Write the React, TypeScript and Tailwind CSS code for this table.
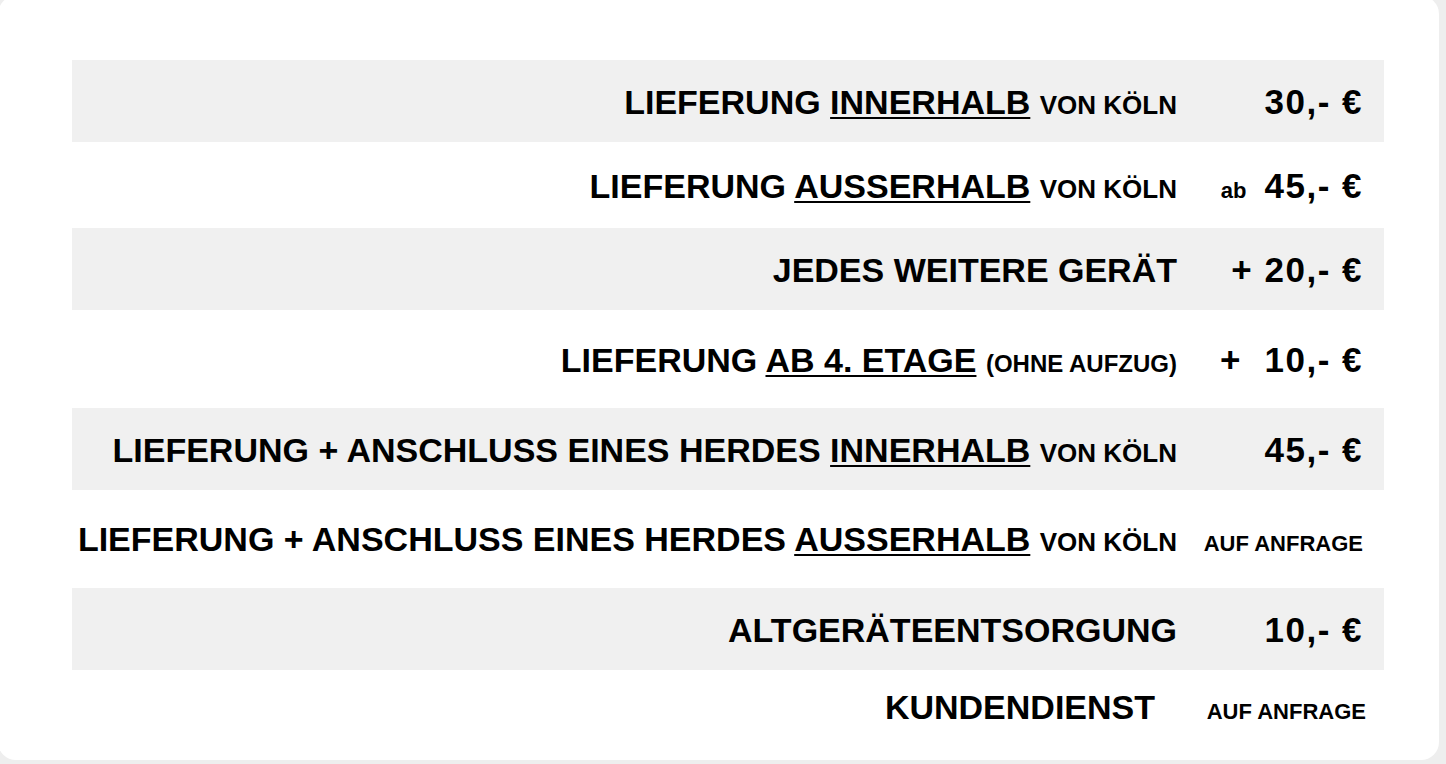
const rows = [
  { bg: "bg-[#f0f0f0]", h: "h-[82px]", label: <>LIEFERUNG <U>INNERHALB</U> <S>VON KÖLN</S></>, price: <P>30,- €</P> },
  { bg: "bg-white", h: "h-[86px]", label: <>LIEFERUNG <U>AUSSERHALB</U> <S>VON KÖLN</S></>, price: <><span className="text-[22px] mr-[18px]">ab</span><P>45,- €</P></> },
  { bg: "bg-[#f0f0f0]", h: "h-[82px]", label: <>JEDES WEITERE GERÄT</>, price: <P>+ 20,- €</P> },
  { bg: "bg-white", h: "h-[98px]", label: <>LIEFERUNG <U>AB 4. ETAGE</U> <span className="text-[24px]">(OHNE AUFZUG)</span></>, price: <P>{"+\u00a0\u00a010,- €"}</P> },
  { bg: "bg-[#f0f0f0]", h: "h-[82px]", label: <>LIEFERUNG + ANSCHLUSS EINES HERDES <U>INNERHALB</U> <S>VON KÖLN</S></>, price: <P>45,- €</P> },
  { bg: "bg-white", h: "h-[98px]", label: <>LIEFERUNG + ANSCHLUSS EINES HERDES <U>AUSSERHALB</U> <S>VON KÖLN</S></>, price: <span className="text-[22px]">AUF ANFRAGE</span> },
  { bg: "bg-[#f0f0f0]", h: "h-[82px]", label: <>ALTGERÄTEENTSORGUNG</>, price: <P>10,- €</P> },
];

function U({ children }: { children: React.ReactNode }) {
  return <span className="underline decoration-2 underline-offset-[3px]">{children}</span>;
}

function S({ children }: { children: React.ReactNode }) {
  return <span className="text-[26px]">{children}</span>;
}

function P({ children }: { children: React.ReactNode }) {
  return <span className="text-[35px] tracking-[1.5px] whitespace-pre">{children}</span>;
}

export default function App() {
  return (
    <div className="min-h-screen bg-[#eeeeee] pb-[4px] font-['Liberation_Sans',Arial,sans-serif] font-bold text-black">
      <div className="w-[1441px] -ml-[2px] -mt-[4px] rounded-[18px] bg-white pt-[64px] pb-[16px] pl-[74px] pr-[55px]">
        <div className="flex flex-col">
          {rows.map((r, i) => (
            <div key={i} className={`flex items-center ${r.bg} ${r.h}`}>
              <div className="flex w-full items-baseline leading-none">
                <div className="flex-1 text-right text-[34px] whitespace-nowrap">{r.label}</div>
                <div className="w-[207px] pr-[21px] text-right whitespace-nowrap">{r.price}</div>
              </div>
            </div>
          ))}
          {/* last row */}
          <div className="flex h-[74px] items-center bg-white">
            <div className="flex w-full items-baseline leading-none">
              <div className="flex-1 pr-[22px] text-right text-[34px]">KUNDENDIENST</div>
              <div className="w-[207px] pr-[18px] text-right text-[22px]">AUF ANFRAGE</div>
            </div>
          </div>
        </div>
      </div>
    </div>
  );
}
